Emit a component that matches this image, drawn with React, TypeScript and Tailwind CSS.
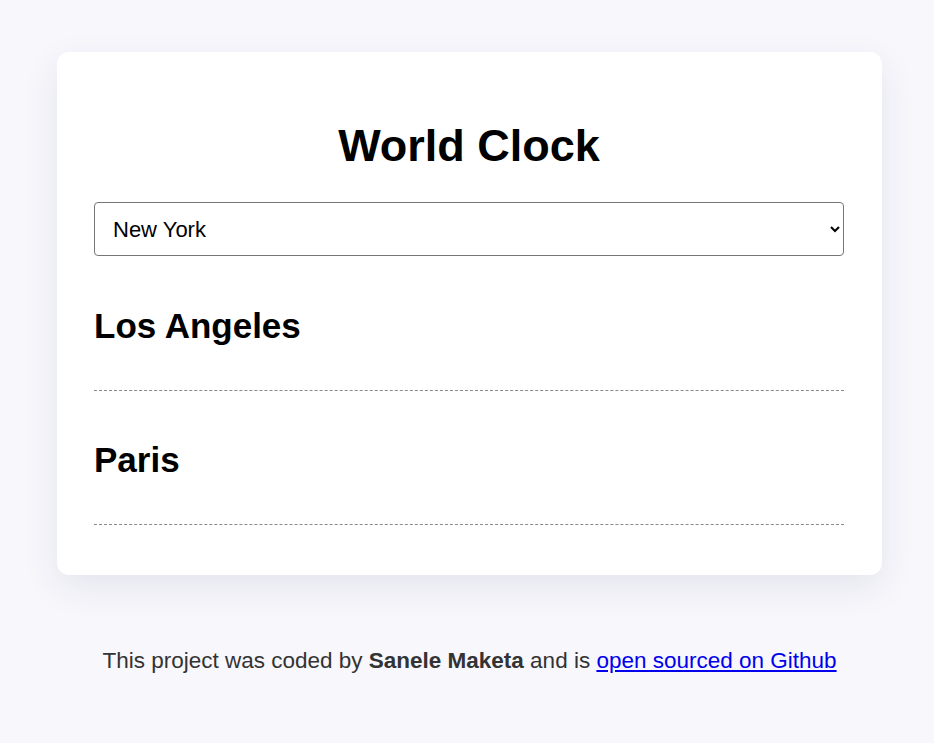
import { useState } from "react";

const CITIES = ["Los Angeles", "Paris"];

export default function App() {
  const [city, setCity] = useState("New York");

  return (
    <div className="min-h-screen bg-[#f7f7fc] pl-[57px] pr-[52px] pt-[52px] font-['Liberation_Sans',Arial,sans-serif] text-black">
      <div className="rounded-[12px] bg-white pb-[50px] pl-[37px] pr-[38px] pt-[72px] shadow-[0_12px_36px_rgba(40,40,90,0.09)]">
        <h1 className="text-center text-[45px] font-bold leading-[44px]">World Clock</h1>
        <select
          value={city}
          onChange={(e) => setCity(e.target.value)}
          className="mt-[34px] block h-[54px] w-full rounded-[4px] border border-[#767676] bg-white pl-[14px] font-['Liberation_Sans',Arial,sans-serif] text-[22px] text-black"
        >
          <option>New York</option>
          <option>Los Angeles</option>
          <option>Paris</option>
          <option>Tokyo</option>
        </select>
        <div className="pt-px">
          {CITIES.map((c) => (
            <div key={c} className="border-b border-dashed border-[#8a8a8a] pb-[47px] pt-[51px]">
              <h2 className="text-[35px] font-bold leading-[35px]">{c}</h2>
            </div>
          ))}
        </div>
      </div>
      <p className="mt-[69px] text-center text-[22.5px] leading-[33px] text-[#333]">
        This project was coded by <strong>Sanele Maketa</strong> and is{" "}
        <a href="#" className="text-[#0000ee] underline">
          open sourced on Github
        </a>
      </p>
    </div>
  );
}
